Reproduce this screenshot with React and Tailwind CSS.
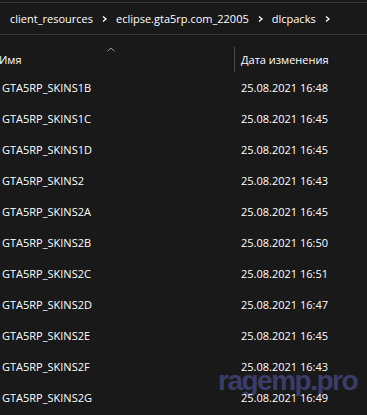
const rows = [
  ['GTA5RP_SKINS1B', '25.08.2021 16:48'],
  ['GTA5RP_SKINS1C', '25.08.2021 16:45'],
  ['GTA5RP_SKINS1D', '25.08.2021 16:45'],
  ['GTA5RP_SKINS2', '25.08.2021 16:43'],
  ['GTA5RP_SKINS2A', '25.08.2021 16:45'],
  ['GTA5RP_SKINS2B', '25.08.2021 16:50'],
  ['GTA5RP_SKINS2C', '25.08.2021 16:51'],
  ['GTA5RP_SKINS2D', '25.08.2021 16:47'],
  ['GTA5RP_SKINS2E', '25.08.2021 16:45'],
  ['GTA5RP_SKINS2F', '25.08.2021 16:43'],
  ['GTA5RP_SKINS2G', '25.08.2021 16:49'],
];

function Chevron() {
  return (
    <svg width="5" height="6" viewBox="0 0 5 6" className="mx-[9px] mt-[1px]">
      <path d="M1 0.5 L4 3 L1 5.5" fill="none" stroke="#fff" strokeWidth="1.3" />
    </svg>
  );
}

export default function App() {
  return (
    <div
      className="w-[367px] h-[415px] overflow-hidden bg-[#191919] text-white text-[11px] leading-[15px] relative"
      style={{ fontFamily: '"Open Sans", "Noto Sans", sans-serif' }}
    >
      {/* Watermark, sits under the list text */}
      <div
        className="absolute left-[218px] top-[367px] text-[28px] leading-none font-bold tracking-[-1.5px] text-[#3a3c69]"
        style={{ fontFamily: '"Liberation Sans", Arial, sans-serif' }}
      >
        ragemp.pro
      </div>

      {/* Breadcrumb */}
      <div className="relative mt-[2px] border-y border-[#3a3a3a] h-[33px] flex items-center pl-[10px]">
        <span>client_resources</span>
        <Chevron />
        <span>eclipse.gta5rp.com_22005</span>
        <Chevron />
        <span>dlcpacks</span>
        <Chevron />
      </div>

      {/* Column header */}
      <div className="relative h-[37px] flex">
        <div className="w-[234px] flex items-end pb-[5px] relative">
          <span className="-ml-[1px]">Имя</span>
          <svg width="8" height="5" viewBox="0 0 8 5" className="absolute left-[107px] top-[12px]">
            <path d="M0.5 4.3 L4 1 L7.5 4.3" fill="none" stroke="#9a9a9a" strokeWidth="1" />
          </svg>
        </div>
        <div className="w-[1px] h-[25px] mt-[12px] bg-[#4a4a4a]" />
        <div className="flex items-end pb-[5px] pl-[6px]">
          <span>Дата изменения</span>
        </div>
      </div>

      {/* Rows */}
      <div className="relative flex flex-col">
        {rows.map(([name, date]) => (
          <div key={name} className="h-[31px] flex items-center">
            <span className="w-[241px] pl-[2px]">{name}</span>
            <span>{date}</span>
          </div>
        ))}
      </div>
    </div>
  );
}
